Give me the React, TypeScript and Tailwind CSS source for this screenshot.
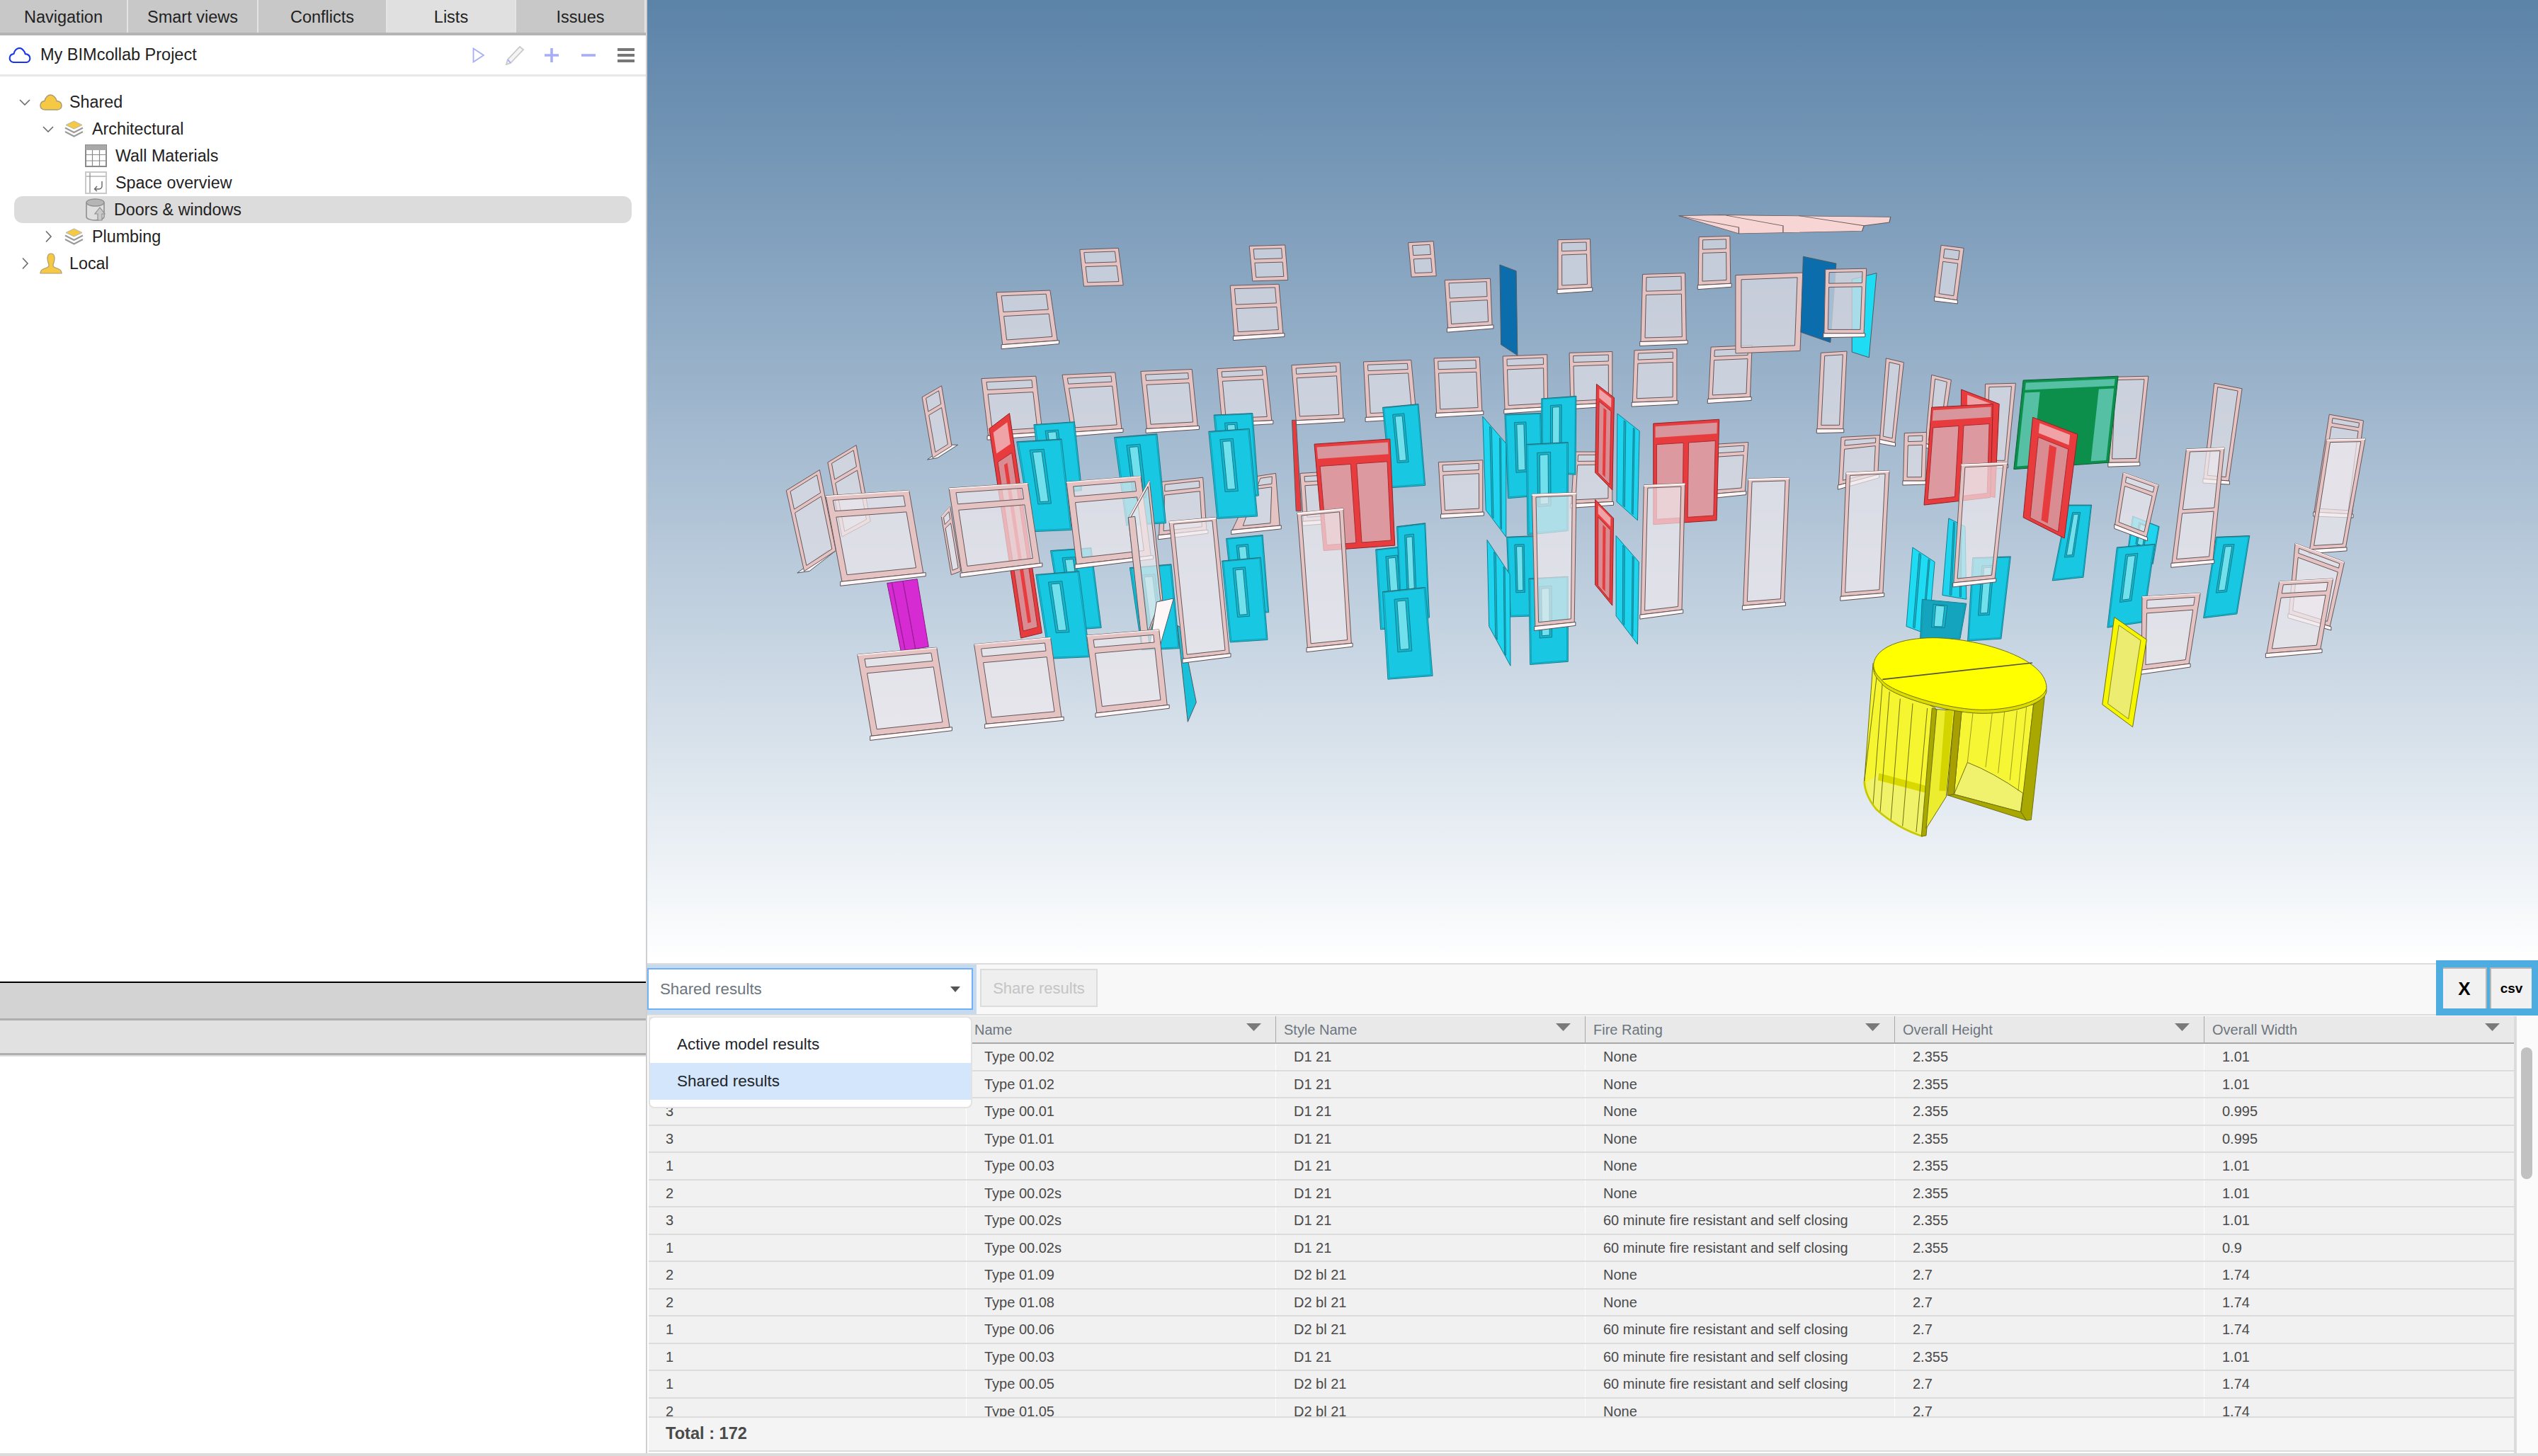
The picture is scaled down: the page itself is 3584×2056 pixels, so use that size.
import React from 'react';

// ---- 3D scene helpers: every element is a projected quad (tl, tr, br, bl) in page pixels ----
type Quad = number[];
type Item =
    | { kind: 'win'; q: Quad; t?: number; front?: boolean; sill?: boolean }
    | { kind: 'door'; q: Quad; color?: string }
    | { kind: 'red'; q: Quad }
    | { kind: 'double'; q: Quad }
    | { kind: 'plain'; q: Quad; color: string }
    | { kind: 'side'; q: Quad; color: string };

const L = (...n: number[]): Quad => n.map((v, i) => (i % 2 === 0 ? 1100 + v / 1.742 : 300 + v / 2.063));
const R = (...n: number[]): Quad => n.map((v, i) => (i % 2 === 0 ? 2000 + v / 1.12 : 280 + v / 1.704));
const Z = (...n: number[]): Quad => n.map((v, i) => (i % 2 === 0 ? 1300 + v / 3 : 600 + v / 3));

const pt = (q: Quad, u: number, v: number): [number, number] => {
    const tx = q[0] + (q[2] - q[0]) * u;
    const ty = q[1] + (q[3] - q[1]) * u;
    const bx = q[6] + (q[4] - q[6]) * u;
    const by = q[7] + (q[5] - q[7]) * u;
    return [tx + (bx - tx) * v, ty + (by - ty) * v];
};

const rect = (q: Quad, u0: number, v0: number, u1: number, v1: number) => {
    const p = [pt(q, u0, v0), pt(q, u1, v0), pt(q, u1, v1), pt(q, u0, v1)];
    return 'M' + p.map((a) => `${a[0].toFixed(1)} ${a[1].toFixed(1)}`).join('L') + 'Z';
};

const sizes = (q: Quad) => ({
    w: Math.hypot(q[2] - q[0], q[3] - q[1]),
    h: Math.hypot(q[6] - q[0], q[7] - q[1]),
});

const Win = ({ q, t, front, sill = true }: { q: Quad; t?: number; front?: boolean; sill?: boolean }) => {
    const { w, h } = sizes(q);
    const px = Math.max(5.5, Math.min(9, w * 0.085));
    const du = Math.min(0.2, px / w);
    const dv = (px * 0.8) / h;
    const holes = t
        ? rect(q, du, dv, 1 - du, t - dv * 0.6) + rect(q, du, t + dv * 0.6, 1 - du, 1 - dv * 1.2)
        : rect(q, du, dv, 1 - du, 1 - dv * 1.2);
    const a = pt(q, -0.02, 1);
    const b = pt(q, 1.03, 1);
    return (
        <g>
            <path d={rect(q, 0, 0, 1, 1)} fill={front ? '#eee8ec' : '#dedde3'} fillOpacity={front ? 0.7 : 0.72} />
            <path d={rect(q, 0, 0, 1, 1) + holes} fillRule="evenodd" fill="#e6c3c3" stroke="#645659" strokeWidth={1} />
            {front && <path d={rect(q, 0, 0, 1, 0.012)} fill="#fff6f6" />}
            {sill && (
                <path
                    d={`M${a[0]} ${a[1]}L${b[0]} ${b[1]}L${b[0]} ${b[1] + 5}L${a[0]} ${a[1] + 6}Z`}
                    fill="#fdf6f6"
                    stroke="#5c5054"
                    strokeWidth={1}
                />
            )}
        </g>
    );
};

const Door = ({ q, color = '#18c8e2' }: { q: Quad; color?: string }) => (
    <g>
        <path d={rect(q, 0, 0, 1, 1)} fill={color} stroke="#137c8e" strokeWidth={1} />
        <path d={rect(q, 0, 0, 1, 0.006)} fill="#3b5f66" />
        <path d={rect(q, 0.035, 0.01, 0.97, 0.985)} fill="none" stroke="#129db3" strokeWidth={1} />
        <path d={rect(q, 0.26, 0.1, 0.58, 0.7)} fill="#14b6ce" stroke="#137c8e" strokeWidth={1} />
        <path d={rect(q, 0.32, 0.125, 0.52, 0.675)} fill="#6fe0ec" stroke="#137c8e" strokeWidth={1} />
    </g>
);

// door seen nearly edge-on: only its leaf edges show
const SideDoor = ({ q, color }: { q: Quad; color: string }) => (
    <g>
        <path d={rect(q, 0, 0, 1, 1)} fill={color} stroke="#137c8e" strokeWidth={1} />
        <path d={rect(q, 0.3, 0.02, 0.38, 0.98)} fill="#14b6ce" stroke="#137c8e" strokeWidth={1} />
        <path d={rect(q, 0.72, 0.02, 0.78, 0.98)} fill="#14b6ce" stroke="#137c8e" strokeWidth={1} />
    </g>
);

const RedDoor = ({ q }: { q: Quad }) => (
    <g>
        <path d={rect(q, 0, 0, 1, 1)} fill="#e83b3e" stroke="#8c2326" strokeWidth={1} />
        <path d={rect(q, 0.16, 0.03, 0.84, 0.13)} fill="#efa3a6" />
        <path d={rect(q, 0.16, 0.17, 0.84, 0.97)} fill="#d98c92" stroke="#a82c30" strokeWidth={1} />
        <path d={rect(q, 0.42, 0.2, 0.58, 0.94)} fill="#e83b3e" />
    </g>
);

const DoubleDoor = ({ q }: { q: Quad }) => (
    <g>
        <path d={rect(q, 0, 0, 1, 1)} fill="#e83b3e" stroke="#8c2326" strokeWidth={1} />
        <path d={rect(q, 0.03, 0.03, 0.97, 0.14)} fill="#d8959b" />
        <path d={rect(q, 0.05, 0.21, 0.46, 0.95)} fill="#dc9aa0" stroke="#a82c30" strokeWidth={1} />
        <path d={rect(q, 0.54, 0.21, 0.95, 0.95)} fill="#dc9aa0" stroke="#a82c30" strokeWidth={1} />
    </g>
);

const win = (q: Quad, t?: number, sill = true): Item => ({ kind: 'win', q, t, sill });
const fwin = (q: Quad, t?: number, sill = true): Item => ({ kind: 'win', q, t, front: true, sill });
const door = (q: Quad, color?: string): Item => ({ kind: 'door', q, color });
const red = (q: Quad): Item => ({ kind: 'red', q });
const dbl = (q: Quad): Item => ({ kind: 'double', q });
const plain = (q: Quad, color: string): Item => ({ kind: 'plain', q, color });
const side = (q: Quad, color: string): Item => ({ kind: 'side', q, color });

const backItems: Item[] = [
    // top rows
    win(L(740, 108, 835, 104, 847, 212, 750, 215), 0.42, false),
    win(L(1157, 98, 1245, 95, 1252, 197, 1165, 200), 0.43, false),
    win(L(1548, 88, 1610, 84, 1617, 185, 1556, 188), 0.43, false),
    win(L(535, 233, 667, 227, 685, 373, 550, 385), 0.42),
    win(L(1110, 213, 1230, 209, 1240, 352, 1120, 360), 0.42),
    win(R(45, 197, 117, 193, 120, 305, 50, 312), 0.42),
    win(R(224, 100, 275, 98, 277, 215, 224, 219), 0.27),
    win(R(358, 183, 425, 180, 427, 342, 355, 345), 0.28),
    win(R(447, 93, 496, 91, 497, 205, 446, 209), 0.3),
    win(R(830, 113, 866, 120, 855, 245, 820, 237), 0.27),
    // first full row
    win(L(498, 484, 632, 477, 648, 640, 515, 650), 0.24),
    win(L(697, 473, 827, 466, 843, 630, 720, 640), 0.2),
    win(L(890, 463, 1016, 457, 1030, 622, 905, 630), 0.2),
    win(L(1078, 455, 1198, 448, 1212, 606, 1090, 612), 0.2),
    win(L(1261, 445, 1380, 437, 1388, 600, 1272, 606), 0.2),
    win(L(1438, 435, 1555, 430, 1568, 590, 1445, 597), 0.2),
    win(R(28, 385, 100, 382, 104, 512, 32, 517), 0.24),
    win(R(137, 380, 207, 376, 208, 502, 140, 508), 0.22),
    win(R(242, 372, 310, 369, 310, 492, 244, 497), 0.22),
    win(R(345, 366, 412, 362, 412, 487, 342, 491), 0.22),
    win(R(466, 358, 531, 354, 528, 478, 462, 483), 0.22),
    win(R(505, 185, 612, 179, 607, 367, 505, 373), undefined, false),
    plain(R(689, 195, 728, 180, 716, 383, 689, 370), '#1fdcf5'),
    plain(R(612, 140, 664, 157, 655, 347, 608, 322), '#0b6dac'),
    plain(R(132, 160, 158, 175, 160, 378, 134, 352), '#0b6dac'),
    win(R(647, 171, 712, 169, 708, 325, 645, 325), 0.25),
    // narrow windows along the right
    win(R(640, 372, 681, 368, 675, 555, 634, 555)),
    win(R(743, 385, 771, 395, 757, 588, 733, 580)),
    win(R(815, 425, 846, 437, 830, 600, 805, 590)),
    win(R(900, 447, 948, 445, 935, 640, 897, 640)),
    win(R(1100, 430, 1158, 428, 1143, 635, 1095, 636)),
    win(R(1262, 445, 1306, 458, 1285, 680, 1245, 675)),
    win(R(1444, 520, 1498, 535, 1480, 760, 1420, 755), 0.1),
    // second row, behind the doors
    win(L(940, 785, 1043, 772, 1052, 925, 935, 940), 0.22),
    win(L(1178, 768, 1222, 760, 1232, 912, 1115, 925), 0.22),
    win(L(1282, 760, 1400, 752, 1410, 890, 1290, 900), 0.22),
    win(R(35, 635, 105, 630, 105, 755, 40, 760), 0.22),
    win(R(250, 610, 310, 610, 310, 730, 245, 735), 0.22),
    win(R(470, 592, 525, 587, 520, 705, 465, 712), 0.22),
    win(R(672, 575, 733, 570, 730, 665, 668, 690), 0.22),
    win(R(772, 565, 807, 563, 805, 680, 770, 680), 0.22),
    // side-on windows on the far left with their angled sills
    plain(L(365, 720, 390, 715, 440, 677, 415, 677), '#fbf3f3'),
    win(L(352, 538, 400, 505, 425, 680, 378, 715), 0.3, false),
    win(L(120, 728, 190, 678, 225, 900, 155, 945), 0.28, false),
    plain(L(45, 1050, 75, 1045, 140, 985, 120, 985), '#fbf3f3'),
    win(L(18, 810, 100, 750, 140, 985, 62, 1045), 0.28, false),
    // doors, rear
    door(L(627, 618, 727, 610, 745, 810, 650, 820)),
    door(L(825, 655, 930, 645, 952, 905, 855, 912)),
    door(L(1070, 590, 1165, 585, 1180, 825, 1090, 835)),
    door(R(198, 482, 253, 476, 252, 665, 198, 660)),
    door(R(140, 520, 197, 517, 200, 715, 145, 722)),
    side(R(105, 525, 142, 590, 142, 815, 110, 750), '#1fd4ee'),
    side(R(318, 518, 353, 560, 350, 775, 317, 730), '#1fd4ee'),
    red(L(517, 630, 567, 585, 647, 1225, 595, 1240)),
    red(R(285, 447, 313, 480, 310, 702, 283, 660)),
    plain(L(1262, 605, 1272, 605, 1285, 870, 1272, 870), '#e83b3e'),
    door(L(585, 668, 695, 660, 720, 925, 622, 930)),
    door(L(1057, 638, 1157, 630, 1177, 885, 1078, 892)),
    door(R(174, 592, 240, 587, 240, 800, 176, 810)),
    door(L(1485, 568, 1573, 558, 1590, 795, 1505, 802)),
    dbl(L(1317, 675, 1503, 660, 1515, 970, 1340, 985)),
    dbl(R(375, 542, 479, 532, 475, 775, 375, 785)),
    // doors, lower row
    door(L(668, 985, 768, 977, 793, 1210, 700, 1218)),
    door(L(863, 1035, 965, 1025, 985, 1270, 893, 1275)),
    door(L(1100, 950, 1190, 940, 1205, 1165, 1120, 1170)),
    door(L(1090, 1015, 1185, 1005, 1202, 1245, 1110, 1252)),
    door(L(1468, 982, 1558, 970, 1575, 1205, 1480, 1215)),
    door(L(1520, 915, 1590, 905, 1600, 1180, 1530, 1190)),
    door(R(143, 815, 190, 812, 190, 1005, 148, 1007)),
    side(R(112, 822, 148, 905, 149, 1125, 115, 1030), '#1fd4ee'),
    side(R(316, 812, 352, 875, 350, 1073, 316, 1005), '#1fd4ee'),
    red(R(283, 725, 312, 770, 310, 980, 283, 930)),
    door(L(632, 1055, 738, 1045, 765, 1295, 665, 1300)),
    plain(Z(1088, 850, 1105, 860, 1168, 1175, 1132, 1258), '#18c0da'),
    door(L(1485, 1105, 1590, 1092, 1608, 1350, 1498, 1360)),
    door(R(178, 915, 240, 910, 240, 1115, 180, 1122)),
    // front windows on the left and middle
    fwin(Z(88, 388, 125, 345, 170, 620, 130, 635), 0.2, false),
    fwin(L(115, 825, 320, 810, 355, 1050, 155, 1075), 0.22),
    fwin(L(418, 803, 612, 788, 642, 1022, 450, 1050), 0.23),
    fwin(L(707, 785, 890, 768, 915, 1000, 732, 1025), 0.22),
    // open window: glass, then post and big sill
    fwin(Z(880, 395, 970, 235, 1025, 735, 945, 945), undefined, false),
    plain(Z(1000, 750, 1072, 735, 1015, 935, 970, 940), '#fdf6f6'),
    plain(Z(880, 392, 908, 388, 970, 940, 940, 948), '#e5c4c4'),
    fwin(L(960, 900, 1075, 888, 1108, 1285, 995, 1300)),
    fwin(R(183, 712, 253, 708, 250, 1020, 188, 1030)),
    fwin(R(360, 690, 425, 686, 420, 990, 355, 1002)),
    fwin(R(525, 675, 590, 672, 582, 972, 517, 980)),
    fwin(L(1275, 875, 1388, 862, 1408, 1255, 1300, 1268)),
    // right hand cluster
    side(R(785, 840, 820, 875, 810, 1050, 775, 1030), '#1fdcf5'),
    side(R(842, 770, 868, 790, 870, 965, 832, 955), '#1fd4ee'),
    door(R(880, 865, 940, 862, 925, 1060, 872, 1065)),
    door(R(800, 965, 870, 975, 860, 1060, 797, 1060), '#14a4bd'),
    door(R(1030, 738, 1068, 738, 1055, 912, 1006, 920)),
    door(R(1133, 765, 1175, 790, 1165, 880, 1125, 850), '#1fd4ee'),
    door(R(1108, 840, 1168, 832, 1150, 1020, 1093, 1033)),
    door(R(1265, 815, 1318, 812, 1298, 1000, 1245, 1010)),
    red(R(862, 460, 922, 495, 915, 720, 860, 700)),
    dbl(R(815, 503, 912, 495, 908, 720, 803, 738)),
];

const frontItems: Item[] = [
    red(R(975, 527, 1046, 568, 1025, 818, 960, 768)),
    fwin(R(680, 660, 748, 655, 738, 950, 672, 958)),
    fwin(R(862, 640, 935, 635, 915, 915, 850, 925)),
    fwin(R(1218, 603, 1278, 600, 1260, 870, 1195, 878), 0.55),
    fwin(R(1118, 660, 1174, 690, 1155, 815, 1105, 785), 0.2),
    fwin(R(1440, 580, 1501, 578, 1470, 840, 1413, 845)),
    fwin(R(1390, 830, 1468, 875, 1445, 1030, 1380, 1000), 0.15),
    fwin(R(1365, 922, 1450, 915, 1430, 1085, 1345, 1095), 0.2),
    fwin(R(1148, 958, 1240, 950, 1222, 1120, 1147, 1135), 0.2),
    fwin(L(193, 1288, 388, 1267, 420, 1500, 228, 1525), 0.2),
    fwin(L(480, 1258, 668, 1238, 695, 1470, 510, 1490), 0.2),
    fwin(L(757, 1232, 935, 1215, 955, 1435, 782, 1458), 0.2),
];

const SceneItem = ({ item }: { item: Item }) => {
    if (item.kind === 'win') return <Win q={item.q} t={item.t} front={item.front} sill={item.sill} />;
    if (item.kind === 'door') return <Door q={item.q} color={item.color} />;
    if (item.kind === 'side') return <SideDoor q={item.q} color={item.color} />;
    if (item.kind === 'red') return <RedDoor q={item.q} />;
    if (item.kind === 'double') return <DoubleDoor q={item.q} />;
    return <path d={rect(item.q, 0, 0, 1, 1)} fill={item.color} stroke="#4f5a60" strokeWidth={1} />;
};

const RevolvingDoor = () => (
    <g transform="translate(2600 860) scale(0.3333)" strokeLinejoin="round" stroke="#6f6f10" strokeWidth={3}>
        {/* left glass drum */}
        <path d="M135 230L98 730Q100 790 150 850Q240 930 345 963L400 420L170 300Z" fill="#f5f530" />
        <path d="M160 698L415 765L360 890L345 963Q240 930 150 850Q110 800 105 735Z" fill="#f0f26a" stroke="none" />
        <path d="M160 695L420 765L420 795L155 725Z" fill="#d9d900" stroke="none" />
        <path d="M150 290L98 730M175 310L135 830M205 350L165 860M250 380L210 900M303 400L260 920M365 420L318 945" fill="none" />
        <path d="M98 730Q100 790 150 850Q240 930 345 963" fill="none" stroke="#c8c800" strokeWidth={8} />
        <path d="M385 420L405 425L360 960L340 963Z" fill="#a8a800" />
        {/* centre leaf */}
        <path d="M405 425L480 430L445 795L360 930Z" fill="#eded30" />
        <path d="M440 430L475 430L445 770L415 770Z" fill="#d4d400" stroke="none" />
        {/* right opening */}
        <path d="M510 435L815 405L765 860L478 785Z" fill="#f6f635" />
        <path d="M535 650Q640 690 770 780L760 860L478 785Z" fill="#f0f26e" />
        <path d="M558 440L535 650M640 440L612 670M692 435L665 695M745 430L715 725M785 415L750 770" fill="none" strokeWidth={2} />
        <path d="M480 430L510 435L478 785L450 790Z" fill="#a8a000" />
        <path d="M455 790L478 785L762 860L785 895Z" fill="#a8a800" />
        <path d="M815 405L862 370L805 893L785 895L762 860Z" fill="#a8a800" />
        {/* lid */}
        <path d="M137 250C145 175 260 137 390 137C560 137 870 215 870 350C860 405 720 442 600 442C450 442 200 365 170 313C150 295 137 275 137 250Z" fill="#dcdc00" />
        <path d="M137 235C145 160 260 122 390 122C560 122 870 200 870 335C860 390 720 427 600 427C450 427 200 350 170 298C150 280 137 260 137 235Z" fill="#ffff00" />
        <path d="M175 298L810 228" fill="none" stroke="#55553a" strokeWidth={5} />
    </g>
);

const Scene = () => {
    const greenQ = R(960, 438, 1110, 428, 1095, 636, 945, 652);
    const yellowQ = R(1104, 1008, 1155, 1062, 1133, 1272, 1085, 1218);
    const mag = L(266, 1080, 340, 1068, 368, 1265, 300, 1278);
    return (
        <svg viewBox="914 0 2670 1360" className="block w-full h-full">
            {/* skylight */}
            <g transform="translate(2000 280) scale(0.893 0.587)">
                <path d="M415 42L480 40L750 45L748 58L708 66L705 79L510 85Z" fill="#f7d5d5" stroke="#6a5c5c" strokeWidth={1.5} />
                <path d="M490 41L580 66L580 82M605 42L708 66M415 42L510 70L510 85" fill="none" stroke="#6a5c5c" strokeWidth={1.5} />
            </g>
            {backItems.map((it, i) => <SceneItem key={i} item={it} />)}
            {/* magenta door */}
            <path d={rect(mag, 0, 0, 1, 1)} fill="#d62ad2" stroke="#8a1a88" strokeWidth={1} />
            <path d={rect(mag, 0.15, 0, 0.16, 1) + rect(mag, 0.52, 0, 0.53, 1)} stroke="#9c1f9a" strokeWidth={1} fill="none" />
            {/* green double door */}
            <path d={rect(greenQ, 0, 0, 1, 1)} fill="#0c8f4b" stroke="#0a5f35" strokeWidth={1} />
            <path d={rect(greenQ, 0.03, 0.03, 0.97, 0.11)} fill="#55c0a4" />
            <path d={rect(greenQ, 0.03, 0.14, 0.19, 0.97)} fill="#55c0a4" />
            <path d={rect(greenQ, 0.81, 0.14, 0.97, 0.97)} fill="#55c0a4" />
            {frontItems.map((it, i) => <SceneItem key={i} item={it} />)}
            {/* yellow door */}
            <path d={rect(yellowQ, 0, 0, 1, 1)} fill="#f6f600" stroke="#6e6e10" strokeWidth={1} />
            <path d={rect(yellowQ, 0.16, 0.05, 0.84, 0.95)} fill="#ecec70" stroke="#8c8c20" strokeWidth={1} />
            <RevolvingDoor />
        </svg>
    );
};

// ---- tree icons ----
const ChevronDown = () => (
    <svg viewBox="0 0 16 9" className="w-[16px] h-[9px]">
        <path d="M1 1L8 8L15 1" fill="none" stroke="#6b6b6b" strokeWidth={1.6} />
    </svg>
);

const ChevronRight = () => (
    <svg viewBox="0 0 16 16" className="w-[16px] h-[16px]">
        <path d="M5 0.5L12 8L5 15.5" fill="none" stroke="#6b6b6b" strokeWidth={1.6} />
    </svg>
);

const cloudPath = 'M8 22C3 22 1 19 1 16C1 12 4 10 7 9.5C8 4 12 1 15.500 1C19 1 23 5 24 9.500C28 10 31 12 31 16C31 19 29 22 25 22Z';

const FolderCloud = () => (
    <svg viewBox="0 0 32 23" className="w-[32px] h-[23px]">
        <path d={cloudPath} fill="#f6c945" stroke="#a99b72" strokeWidth={1.5} />
    </svg>
);

const Layers = () => (
    <svg viewBox="0 0 29 24" className="w-[29px] h-[24px]">
        <path d="M14.5 1L26 6.500L14.5 12L3 6.500Z" fill="#f6c945" stroke="#b5b5b5" strokeWidth={1} />
        <path d="M2 10.500L14.500 17L27 10.500M2 16L14.500 22.500L27 16" fill="none" stroke="#9a9a9a" strokeWidth={2} />
    </svg>
);

const TableIcon = () => (
    <svg viewBox="0 0 31 32" className="w-[31px] h-[32px]">
        <rect x="1" y="1" width="29" height="30" fill="#fff" stroke="#8a8a8a" strokeWidth={2} />
        <rect x="1" y="1" width="29" height="7" fill="#a9a9a9" />
        <path d="M1 14.500H30M1 23H30M10.500 8V31M20.500 8V31" stroke="#8a8a8a" strokeWidth={1.2} fill="none" />
    </svg>
);

const SmartIcon = () => (
    <svg viewBox="0 0 31 32" className="w-[31px] h-[32px]">
        <rect x="1" y="1" width="29" height="30" fill="#fff" stroke="#c9c9c9" strokeWidth={2} />
        <path d="M2 7H29M7 2V30" stroke="#8a8a8a" strokeWidth={1.2} fill="none" />
        <path d="M24 14V21C24 23 22 25 20 25H14M17 21L13.500 25L17 28" stroke="#666" strokeWidth={1.4} fill="none" />
    </svg>
);

const CylinderIcon = () => (
    <svg viewBox="0 0 29 32" className="w-[29px] h-[32px]">
        <path d="M2 6V26C2 29 8 31 14 31C21 31 27 29 27 26V6" fill="#dedede" stroke="#8f8f8f" strokeWidth={1.6} />
        <ellipse cx="14.500" cy="6" rx="12.500" ry="5" fill="#b5b5b5" stroke="#8f8f8f" strokeWidth={1.4} />
        <path d="M21 13L14 22H18V31H24V22H28Z" fill="#c9c9c9" stroke="#8f8f8f" strokeWidth={1.2} />
    </svg>
);

const PersonIcon = () => (
    <svg viewBox="0 0 32 30" className="w-[32px] h-[30px]">
        <path d="M16 1C12 1 11 4 11 8C11 13 13 15 13 18C13 21 9 21 5 23C2 24.500 1 27 1 29H31C31 27 30 24.500 27 23C23 21 19 21 19 18C19 15 21 13 21 8C21 4 20 1 16 1Z" fill="#f6c945" stroke="#a99b72" strokeWidth={1.2} />
    </svg>
);

const tabs = [
    { label: 'Navigation', width: 'w-[181px]' },
    { label: 'Smart views', width: 'w-[184px]' },
    { label: 'Conflicts', width: 'w-[182px]' },
    { label: 'Lists', width: 'w-[182px]', active: true },
    { label: 'Issues', width: 'flex-1' },
];

const levels = ['pl-[7px]', 'pl-[40px]', 'pl-[100px]'];
const slots = ['w-[29px]', 'w-[30px]', 'w-0'];
const gaps = ['ml-[10px]', 'ml-[11px]', 'ml-[12px]'];

const tree = [
    { level: 0, chevron: 'down', icon: <FolderCloud />, label: 'Shared' },
    { level: 1, chevron: 'down', icon: <Layers />, label: 'Architectural' },
    { level: 2, icon: <TableIcon />, label: 'Wall Materials' },
    { level: 2, icon: <SmartIcon />, label: 'Space overview' },
    { level: 2, icon: <CylinderIcon />, label: 'Doors & windows', selected: true },
    { level: 1, chevron: 'right', icon: <Layers />, label: 'Plumbing' },
    { level: 0, chevron: 'right', icon: <PersonIcon />, label: 'Local' },
];

const FIRE = '60 minute fire resistant and self closing';

const rows = [
    ['1', 'Type 00.02', 'D1 21', 'None', '2.355', '1.01'],
    ['2', 'Type 01.02', 'D1 21', 'None', '2.355', '1.01'],
    ['3', 'Type 00.01', 'D1 21', 'None', '2.355', '0.995'],
    ['3', 'Type 01.01', 'D1 21', 'None', '2.355', '0.995'],
    ['1', 'Type 00.03', 'D1 21', 'None', '2.355', '1.01'],
    ['2', 'Type 00.02s', 'D1 21', 'None', '2.355', '1.01'],
    ['3', 'Type 00.02s', 'D1 21', FIRE, '2.355', '1.01'],
    ['1', 'Type 00.02s', 'D1 21', FIRE, '2.355', '0.9'],
    ['2', 'Type 01.09', 'D2 bl 21', 'None', '2.7', '1.74'],
    ['2', 'Type 01.08', 'D2 bl 21', 'None', '2.7', '1.74'],
    ['1', 'Type 00.06', 'D2 bl 21', FIRE, '2.7', '1.74'],
    ['1', 'Type 00.03', 'D1 21', FIRE, '2.355', '1.01'],
    ['1', 'Type 00.05', 'D2 bl 21', FIRE, '2.7', '1.74'],
    ['2', 'Type 01.05', 'D2 bl 21', 'None', '2.7', '1.74'],
];

const columns = ['Name', 'Style Name', 'Fire Rating', 'Overall Height', 'Overall Width'];

const Caret = () => (
    <svg viewBox="0 0 21 11" className="w-[21px] h-[11px]">
        <path d="M0 0H21L10.500 11Z" fill="#7a7a7a" />
    </svg>
);

export default function App() {
    return (
        <div className="w-[3584px] h-[2056px] overflow-hidden flex flex-col bg-white font-['Liberation_Sans',Arial,sans-serif]">
            <div className="flex h-[2052px]">
                {/* Left panel */}
                <div className="w-[912px] flex flex-col shrink-0">
                    <div className="flex h-[50px] border-b-4 border-[#b4b4b4] bg-[#c8c8c8] shrink-0">
                        {tabs.map((tab) => (
                            <div
                                key={tab.label}
                                className={`${tab.width} ${tab.active ? 'bg-[#e0e0e0]' : ''} flex items-center justify-center pt-[3px] border-r-2 border-[#e4e4e4] text-[23.5px] text-[#222]`}
                            >
                                {tab.label}
                            </div>
                        ))}
                    </div>
                    <div className="flex items-center h-[58px] border-b-[3px] border-[#e8e8e8] pl-[12px] shrink-0">
                        <svg viewBox="0 0 32 23" className="w-[32px] h-[22px]">
                            <path d={cloudPath} fill="none" stroke="#1a35f0" strokeWidth={2.2} />
                        </svg>
                        <span className="ml-[13px] pt-[1px] text-[23.5px] text-[#222]">My BIMcollab Project</span>
                        <div className="ml-auto flex items-center pr-[16px]">
                            <svg viewBox="0 0 18 22" className="w-[18px] h-[22px]">
                                <path d="M1.500 1.500L16 11L1.500 20.500Z" fill="none" stroke="#a7aef7" strokeWidth={1.8} />
                            </svg>
                            <svg viewBox="0 0 28 28" className="w-[28px] h-[28px] ml-[28px]">
                                <path d="M21 2L26 6L8 25L2 27L4 20Z" fill="#f4f4f4" stroke="#c9c9c9" strokeWidth={1.8} />
                                <path d="M4 20L8 25" stroke="#a7aef7" strokeWidth={2} />
                            </svg>
                            <svg viewBox="0 0 20 20" className="w-[20px] h-[20px] ml-[28px]">
                                <path d="M0 10H20M10 0V20" stroke="#a7aef7" strokeWidth={3.6} />
                            </svg>
                            <svg viewBox="0 0 20 20" className="w-[20px] h-[20px] ml-[32px]">
                                <path d="M0 10H20" stroke="#a7aef7" strokeWidth={3.6} />
                            </svg>
                            <div className="ml-[31px] w-[24px] flex flex-col gap-[4px]">
                                <div className="h-[4px] bg-[#777]" />
                                <div className="h-[4px] bg-[#777]" />
                                <div className="h-[4px] bg-[#777]" />
                            </div>
                        </div>
                    </div>
                    <div className="flex-1 pt-[17px] px-[20px]">
                        {tree.map((node) => (
                            <div
                                key={node.label}
                                className={`h-[38px] flex items-center rounded-[12px] ${levels[node.level]} ${node.selected ? 'bg-[#dcdcdc]' : ''}`}
                            >
                                <div className={`${slots[node.level]} flex items-center shrink-0`}>
                                    {node.chevron === 'down' && <ChevronDown />}
                                    {node.chevron === 'right' && <ChevronRight />}
                                </div>
                                {node.icon}
                                <span className={`${gaps[node.level]} text-[23.3px] text-[#222]`}>{node.label}</span>
                            </div>
                        ))}
                    </div>
                    <div className="h-[2px] bg-black shrink-0" />
                    <div className="h-[53px] bg-[#d3d3d3] border-b-[3px] border-[#aeaeae] shrink-0" />
                    <div className="h-[49px] bg-[#e1e1e1] border-b-[3px] border-[#aeaeae] shrink-0" />
                    <div className="h-[2px] bg-[#e0e0e0] shrink-0" />
                    <div className="h-[560px] bg-white shrink-0" />
                </div>
                <div className="w-[2px] bg-[#cfcfcf] shrink-0" />

                {/* Right side */}
                <div className="flex-1 flex flex-col min-w-0">
                    <div className="h-[1360px] shrink-0 bg-gradient-to-b from-[#5b83a8] to-white">
                        <Scene />
                    </div>
                    <div className="h-[2px] bg-[#dcdcdc] shrink-0" />
                    <div className="h-[72px] flex items-center bg-[#f8f8f8] border-b-2 border-[#dcdcdc] shrink-0">
                        <div className="relative w-[465px] h-full pt-[5px] pb-[6px] pr-[5px] bg-[#c5d9ef]">
                            <div className="h-full flex items-center justify-between bg-white border-2 border-[#6fb1f7] pl-[16px] pr-[16px] text-[22.3px] text-[#6c757d]">
                                Shared results
                                <svg viewBox="0 0 14 8" className="w-[14px] h-[8px]">
                                    <path d="M0 0H14L7 8Z" fill="#555" />
                                </svg>
                            </div>
                            {/* open dropdown */}
                            <div className="absolute z-10 top-[73px] left-[2px] w-[457px] h-[130px] pt-[12px] bg-white rounded-[8px] border-2 border-[#e2e2e2] text-[22.5px] text-[#212529]">
                                <div className="h-[52px] flex items-center pl-[38px]">Active model results</div>
                                <div className="h-[52px] flex items-center pl-[38px] bg-[#d4e6fb]">Shared results</div>
                            </div>
                        </div>
                        <div className="ml-[5px] mb-[4px] w-[166px] h-[54px] flex items-center justify-center bg-[#efefef] border-2 border-[#dcdcdc] text-[22px] text-[#c4c4c4]">
                            Share results
                        </div>
                        <div className="ml-auto -mt-[6px] self-start h-[78px] w-[144px] bg-[#4dade0] flex gap-[4px] pl-[10px] pr-[9px] py-[10px]">
                            <div className="w-[62px] h-full flex items-center justify-center bg-[#f1f1f1] border-t-2 border-r-2 border-[#b5b5b5] text-[26px] font-bold text-black">
                                X
                            </div>
                            <div className="flex-1 h-full flex items-center justify-center bg-[#f1f1f1] border-t-2 border-l-2 border-[#b5b5b5] text-[19px] font-bold text-black">
                                csv
                            </div>
                        </div>
                    </div>

                    <div className="flex flex-1 min-h-0 pl-[2px] pt-[1px]">
                        <div className="w-[2634px] flex flex-col min-h-0">
                            {/* table head */}
                            <div className="h-[39px] flex bg-[#e9e9e9] border-b-2 border-[#a8a8a8] shrink-0 text-[20px] text-[#6c757d]">
                                <div className="w-[449px] border-r border-[#a8a8a8] shrink-0" />
                                {columns.map((col) => (
                                    <div key={col} className="w-[437px] shrink-0 flex justify-between pl-[11px] pr-[20px] pt-[4px] border-r border-[#a8a8a8] last:border-r-0">
                                        {col}
                                        <div className="pt-[6px]">
                                            <Caret />
                                        </div>
                                    </div>
                                ))}
                            </div>
                            {/* table body */}
                            <div className="h-[526px] overflow-hidden shrink-0 text-[20px] text-[#4a4a4a]">
                                {rows.map((row, i) => (
                                    <div key={i} className="h-[38.5px] flex bg-[#f1f1f1] border-b-2 border-[#dcdcdc]">
                                        <div className="w-[449px] shrink-0 pl-[24px] flex items-center border-r border-white">{row[0]}</div>
                                        {row.slice(1).map((cell, j) => (
                                            <div key={j} className="w-[437px] shrink-0 pl-[25px] flex items-center border-r border-white last:border-r-0">
                                                {cell}
                                            </div>
                                        ))}
                                    </div>
                                ))}
                            </div>
                            <div className="h-[50px] shrink-0 flex items-center pl-[24px] bg-[#f4f4f4] border-y-2 border-[#dcdcdc] text-[23.6px] font-bold text-[#4a4a4a]">
                                Total : 172
                            </div>
                        </div>
                        <div className="w-[4px] bg-[#dcdcdc] shrink-0" />
                        <div className="flex-1 bg-[#fbfbfb] pl-[6px] pt-[44px]">
                            <div className="w-[16px] h-[186px] rounded-full bg-[#c1c1c1]" />
                        </div>
                    </div>
                </div>
            </div>
            <div className="h-[4px] bg-[#dcdcdc] shrink-0" />
        </div>
    );
}
